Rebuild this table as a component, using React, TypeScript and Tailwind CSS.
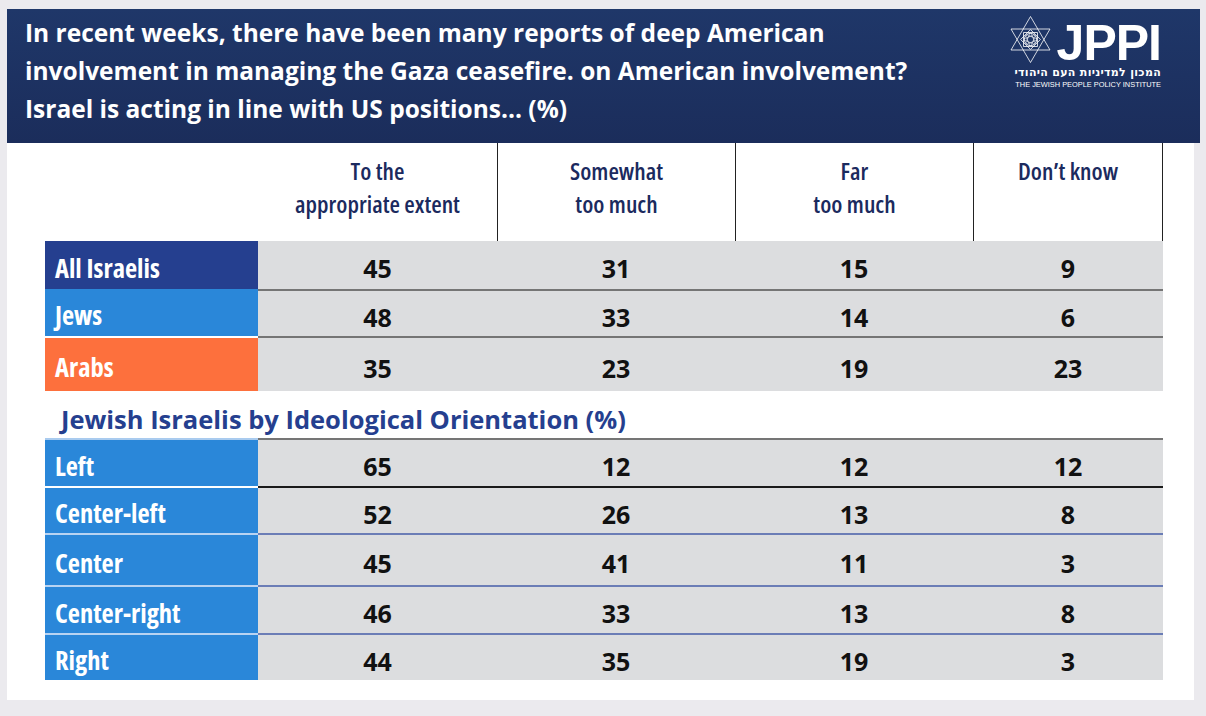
const COLUMNS = [
  ["To the", "appropriate extent"],
  ["Somewhat", "too much"],
  ["Far", "too much"],
  ["Don’t know"],
]

type Row = {
  label: string
  values: number[]
  height: string
  labelClass: string
  dataClass: string
}

const TOP_ROWS: Row[] = [
  {
    label: "All Israelis",
    values: [45, 31, 15, 9],
    height: "h-[48px]",
    labelClass: "bg-[#253f8f]",
    dataClass: "",
  },
  {
    label: "Jews",
    values: [48, 33, 14, 6],
    height: "h-[47px]",
    labelClass: "bg-[#2a87d9]",
    dataClass: "border-t-2 border-[#757575]",
  },
  {
    label: "Arabs",
    values: [35, 23, 19, 23],
    height: "h-[55px]",
    labelClass: "bg-[#fd703d] border-t-2 border-white",
    dataClass: "border-t-2 border-[#757575]",
  },
]

const IDEOLOGY_ROWS: Row[] = [
  {
    label: "Left",
    values: [65, 12, 12, 12],
    height: "h-[48px]",
    labelClass: "bg-[#2a87d9] border-t-2 border-[#a9cbef]",
    dataClass: "border-t-2 border-[#757575]",
  },
  {
    label: "Center-left",
    values: [52, 26, 13, 8],
    height: "h-[47px]",
    labelClass: "bg-[#2a87d9] border-t-2 border-white",
    dataClass: "border-t-2 border-[#1a1a1a]",
  },
  {
    label: "Center",
    values: [45, 41, 11, 3],
    height: "h-[52px]",
    labelClass: "bg-[#2a87d9] border-t-2 border-[#b8d3f2]",
    dataClass: "border-t-2 border-[#6b7db6]",
  },
  {
    label: "Center-right",
    values: [46, 33, 13, 8],
    height: "h-[48px]",
    labelClass: "bg-[#2a87d9] border-t-2 border-[#b8d3f2]",
    dataClass: "border-t-2 border-[#6b7db6]",
  },
  {
    label: "Right",
    values: [44, 35, 19, 3],
    height: "h-[47px]",
    labelClass: "bg-[#2a87d9] border-t-2 border-[#b8d3f2]",
    dataClass: "border-t-2 border-[#6b7db6]",
  },
]

function StarMark() {
  return (
    <svg
      width="41"
      height="47"
      viewBox="0 0 41 47"
      fill="none"
      stroke="white"
      strokeWidth="0.8"
      strokeLinejoin="round"
      className="mr-[6px]"
    >
      <polygon points="20.5,0.5 40,34 1,34" />
      <polygon points="20.5,46.5 1,13 40,13" />
      <rect x="13.5" y="16.5" width="14" height="14" />
      <rect x="13.5" y="16.5" width="14" height="14" transform="rotate(45 20.5 23.5)" />
      <circle cx="20.5" cy="23.5" r="6.2" />
      <circle cx="20.5" cy="23.5" r="3.2" />
      {[0, 45, 90, 135, 180, 225, 270, 315].map((angle) => (
        <circle
          key={angle}
          cx="20.5"
          cy="18.8"
          r="1.4"
          strokeWidth="0.6"
          transform={`rotate(${angle} 20.5 23.5)`}
        />
      ))}
    </svg>
  )
}

function Logo() {
  return (
    <div className="flex flex-col items-end pt-[7px] pr-[39px]">
      <div className="flex h-[51px] items-start">
        <StarMark />
        <span
          className="mt-[7px] text-[50px] leading-[40px] font-bold tracking-[-1px] text-white"
          style={{ fontFamily: '"Liberation Sans", Arial, sans-serif' }}
        >
          JPPI
        </span>
      </div>
      <div
        dir="rtl"
        className="text-[11px] leading-[12px] font-bold tracking-[0.3px] text-white"
        style={{ fontFamily: '"DejaVu Sans", sans-serif' }}
      >
        המכון למדיניות העם היהודי
      </div>
      <div
        className="mt-[1px] text-[7.4px] leading-[9px] text-white"
        style={{ fontFamily: '"Liberation Sans", Arial, sans-serif' }}
      >
        THE JEWISH PEOPLE POLICY INSTITUTE
      </div>
    </div>
  )
}

function DataRow({ row }: { row: Row }) {
  return (
    <div className={`grid grid-cols-[213px_239px_238px_238px_190px] ${row.height}`}>
      <div
        className={`flex items-center pt-[5px] pl-[10px] text-[26.5px] leading-[30px] font-bold text-white [font-stretch:75%] ${row.labelClass}`}
      >
        {row.label}
      </div>
      {row.values.map((value, index) => (
        <div
          key={index}
          className={`flex items-center justify-center bg-[#dcdddf] pt-[6px] text-[25px] leading-[30px] font-bold text-[#111] ${row.dataClass}`}
        >
          {value}
        </div>
      ))}
    </div>
  )
}

export default function App() {
  return (
    <div
      className="h-[716px] w-[1206px] bg-[#ebeaee] pt-[9px] pl-[7px]"
      style={{ fontFamily: '"Open Sans", "Noto Sans", sans-serif' }}
    >
      <header className="flex h-[134px] w-[1193px] justify-between bg-gradient-to-b from-[#1f3769] to-[#1b2d5b]">
        <h1 className="pt-[5px] pl-[18px] text-[24.5px] leading-[38px] font-bold text-white">
          In recent weeks, there have been many reports of deep American
          <br />
          involvement in managing the Gaza ceasefire. on American involvement?
          <br />
          Israel is acting in line with US positions... (%)
        </h1>
        <Logo />
      </header>

      <div className="h-[557px] w-[1187px] bg-white pl-[38px]">
        <div className="grid h-[98px] grid-cols-[213px_239px_238px_238px_190px]">
          <div />
          {COLUMNS.map((lines, index) => (
            <div
              key={index}
              className={`pt-[11px] text-center text-[24px] leading-[33px] font-semibold text-[#1b2a5e] [font-stretch:75%] ${
                index > 0 ? "border-l border-[#222]" : ""
              } ${index === 3 ? "border-r border-[#222]" : ""}`}
            >
              {lines.map((line) => (
                <div key={line}>{line}</div>
              ))}
            </div>
          ))}
        </div>

        {TOP_ROWS.map((row) => (
          <DataRow key={row.label} row={row} />
        ))}

        <div className="h-[47px] pt-[13px] pl-[16px] text-[25.5px] leading-[30px] font-bold text-[#253f8f]">
          Jewish Israelis by Ideological Orientation (%)
        </div>

        {IDEOLOGY_ROWS.map((row) => (
          <DataRow key={row.label} row={row} />
        ))}
      </div>
    </div>
  )
}
